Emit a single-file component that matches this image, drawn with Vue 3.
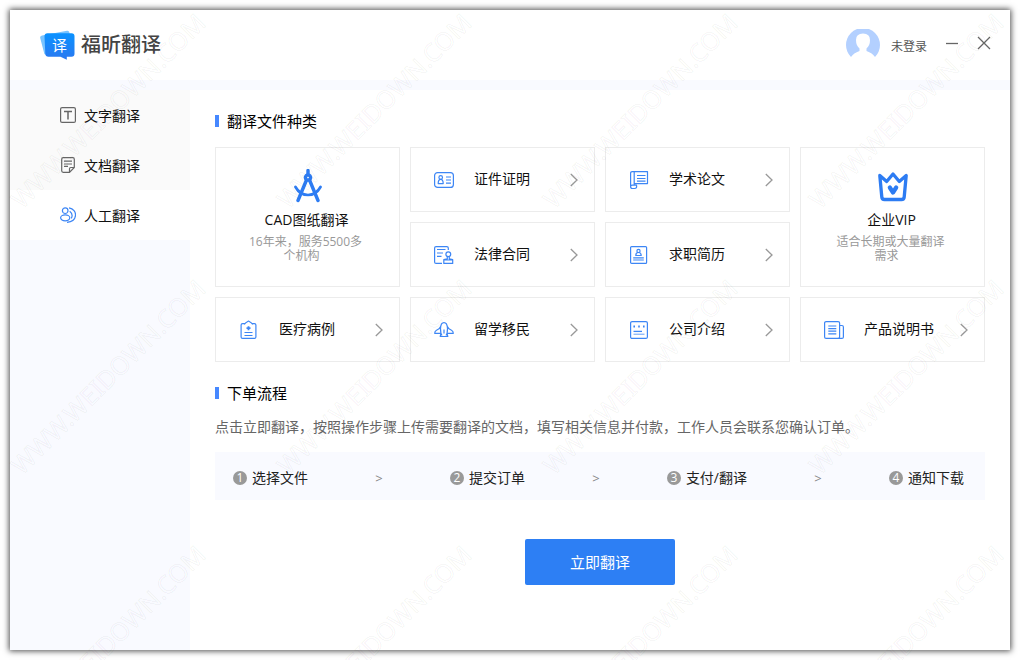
<script setup>
import { ref } from 'vue'

const menu = [
  { id: 'text', label: '文字翻译' },
  { id: 'doc', label: '文档翻译' },
  { id: 'human', label: '人工翻译' },
]
const active = ref('human')

const kinds = [
  { id: 'cad', label: 'CAD图纸翻译', lines: ['16年来，服务5500多', '个机构'] },
  { id: 'license', label: '证件证明' },
  { id: 'paper', label: '学术论文' },
  { id: 'vip', label: '企业VIP', lines: ['适合长期或大量翻译', '需求'] },
  { id: 'contract', label: '法律合同' },
  { id: 'resume', label: '求职简历' },
  { id: 'medical', label: '医疗病例' },
  { id: 'abroad', label: '留学移民' },
  { id: 'company', label: '公司介绍' },
  { id: 'manual', label: '产品说明书' },
]

const steps = ['选择文件', '提交订单', '支付/翻译', '通知下载']

const marks = []
for (let row = 0; row < 3; row++) {
  for (let col = 0; col < 4; col++) marks.push({ x: 22 + col * 266, y: 210 + row * 266 })
}
</script>

<template>
  <div class="desktop">
    <div class="window">
      <header class="header">
        <div class="brand">
          <svg class="logo" viewBox="0 0 35 30" aria-hidden="true">
            <defs>
              <linearGradient id="logoFill" x1="0" y1="0" x2="0" y2="1">
                <stop offset="0" stop-color="#0a92ff" />
                <stop offset="1" stop-color="#2b78f0" />
              </linearGradient>
            </defs>
            <path d="M2 5.400 27 .8q2-.3 2.400 1.600L30 5 8 26l-3.600-2L.2 8Q-.2 5.800 2 5.400z" fill="#79c4ff" />
            <path d="M7.500 3.300h24q3 0 3 3v17.400q0 3-3 3H26.800V29.800L20.500 26.700H8.500q-3 0-3.200-3L4.500 6.300q0-3 3-3z" fill="url(#logoFill)" />
            <text x="19.500" y="21" text-anchor="middle" class="logo-char">译</text>
          </svg>
          <h1 class="brand-name">福昕翻译</h1>
        </div>
        <div class="account">
          <button class="user" type="button">
            <svg class="avatar" viewBox="0 0 34 28" aria-hidden="true">
              <path d="M5 28A17 17 0 1 1 29 28Q26.500 24 20.500 22V19.500Q24 16.500 24 11Q24 4.500 17 4.500T10 11Q10 16.500 13.500 19.500V22Q7.500 24 5 28z" fill="#b3d0ff" />
            </svg>
            <span>未登录</span>
          </button>
          <button class="win-btn" type="button" aria-label="最小化">
            <svg viewBox="0 0 14 14"><path d="M1 7.500h12" /></svg>
          </button>
          <button class="win-btn" type="button" aria-label="关闭">
            <svg viewBox="0 0 14 14"><path d="M1 1l12 12M13 1 1 13" /></svg>
          </button>
        </div>
      </header>

      <div class="body">
        <nav class="sidebar">
          <button
            v-for="m in menu"
            :key="m.id"
            type="button"
            class="menu-item"
            :class="{ active: active === m.id }"
            @click="active = m.id"
          >
            <svg class="menu-icon" viewBox="0 0 16 16" aria-hidden="true">
              <template v-if="m.id === 'text'">
                <rect x=".6" y=".6" width="14.800" height="14.800" rx="1.500" />
                <path d="M4 4.500h8M8 4.500V12.500" stroke-width="1.500" />
              </template>
              <template v-else-if="m.id === 'doc'">
                <path d="M14.300 9.500V2.200q0-1.500-1.500-1.500H3.200q-1.500 0-1.500 1.500v11.600q0 1.500 1.500 1.500h6.300l4.800-4.800V9.500M9.500 15V11.800q0-1.300 1.300-1.300h3.400" />
                <path d="M4 4.200h8M4 7h8M4 9.300h4" />
              </template>
              <template v-else>
                <circle cx="5.200" cy="3.700" r="2.800" />
                <ellipse cx="5.200" cy="10.800" rx="4.600" ry="3" />
                <path d="M9 .8c9 1.500 9 13.500-2 14.500M9.700 4.200q3.800 3 1.600 7.200" />
              </template>
            </svg>
            <span>{{ m.label }}</span>
          </button>
        </nav>

        <main class="main">
          <h2 class="title">翻译文件种类</h2>
          <div class="kinds">
            <button v-for="k in kinds" :key="k.id" type="button" class="card" :class="{ tall: k.lines }">
              <template v-if="k.lines">
                <svg v-if="k.id === 'cad'" class="big-icon" viewBox="0 0 28 34" aria-hidden="true">
                  <path d="M14 1.500V6M12.500 11 4 31.500M15.500 11 24 31.500" stroke-width="3.400" />
                  <path d="M1.500 18Q6 26 14 26T26.500 18" stroke-width="2.700" />
                  <circle cx="14" cy="8.500" r="2.600" stroke-width="3.400" />
                </svg>
                <svg v-else class="big-icon vip" viewBox="0 0 30 34" aria-hidden="true">
                  <path d="M1.800 6.500 8.700 12.500 15 5 21.300 12.500 28.200 6.500 26.200 28Q26 30.500 23.500 30.500H6.500Q4 30.500 3.800 28z" stroke-width="3.300" />
                  <path d="M11.800 18.500 15 23.500 18.200 18.500" stroke-width="4.200" />
                </svg>
                <span class="tall-label">{{ k.label }}</span>
                <span class="desc">
                  <span v-for="l in k.lines" :key="l" class="desc-line">{{ l }}</span>
                </span>
              </template>
              <template v-else>
                <svg class="icon" viewBox="0 0 20 20" aria-hidden="true">
                  <template v-if="k.id === 'license'">
                    <rect x=".6" y="2.600" width="18.800" height="14.800" rx="3" />
                    <circle cx="6.700" cy="7.500" r="1.800" />
                    <path d="M4.200 13.600q0-4.300 2.500-4.300t2.500 4.300zM12 7h5M12 10h5M12 13.200h5" />
                  </template>
                  <template v-else-if="k.id === 'paper'">
                    <path d="M5 1.600h13.500v12H5.200M5.200 1.600H3.300q-1.700 0-1.700 1.700v13.200M5.200 1.600v13.600M1.600 16.800q0-1.600 1.700-1.600H7.500q.8 3.300-2 3.300H3.300q-1.700 0-1.700-1.700z" />
                    <path d="M8 5.500h8.500M8 8.500h8.500M8 11.200h8.500" />
                  </template>
                  <template v-else-if="k.id === 'contract'">
                    <path d="M14.300 5V3.100q0-1.500-1.500-1.500H2.100q-1.500 0-1.500 1.500v13.800q0 1.500 1.500 1.500H8M3 4.500h8.500M3 8h6M3 11.300h4.500" />
                    <circle cx="14.300" cy="9.300" r="2.400" />
                    <path d="M13.300 11.600v2.200l-3.500.9v3.700h8.900v-3.700l-3.400-.9v-2.200M9.800 15h8.900" />
                  </template>
                  <template v-else-if="k.id === 'resume'">
                    <rect x="1.600" y="1.600" width="16" height="16.800" rx="1" />
                    <circle cx="9.500" cy="5.900" r="1.600" />
                    <path d="M6.800 10.500q0-3 2.700-3t2.700 3zM4.200 12.900h10.600M4.200 15h10.600" />
                  </template>
                  <template v-else-if="k.id === 'medical'">
                    <path d="M6 3.600H3.600q-1.500 0-1.500 1.500v11.800q0 1.500 1.500 1.500h11.800q1.500 0 1.500-1.500V5.100q0-1.500-1.500-1.500H13M5.200 4.500Q6 2.800 9.500 1q3.500 1.800 4.300 3.500" />
                    <path d="M9.500 6.200v4M7.500 8.200h4" stroke-width="1.800" />
                    <path d="M5.500 12.500h8M5.500 15.500h8" />
                  </template>
                  <template v-else-if="k.id === 'abroad'">
                    <path d="M8 15.500Q6.500 13.500 6.500 8.500 6.800 2.600 10 2.600t3.500 5.900q0 5-1.500 7M6.500 6.800Q5.800 9 2.500 10.300.7 11.200.7 13.300H7M13.500 6.800q.7 2.200 4 3.500 1.800.9 1.800 3H13M10 9.500v4M7 13.500l-.8 3h7.600l-.8-3" />
                  </template>
                  <template v-else-if="k.id === 'company'">
                    <rect x="1.600" y="1.600" width="16.800" height="16.800" rx="1.500" />
                    <path d="M4.400 6.400h1.600M9.200 6.400h1.600M14 6.400h1.600" stroke-width="2" />
                    <path d="M4.500 11.400h8.500" stroke-width="1.300" />
                    <path d="M4.500 14.200h11" stroke-width=".8" />
                  </template>
                  <template v-else>
                    <rect x=".6" y="1.600" width="15" height="16.800" rx="1.500" />
                    <path d="M15.600 5.500h2.300q1.500 0 1.500 1.500v9.900q0 1.500-1.500 1.500h-4M4.300 6h8M4.300 8.600h8M4.300 11.200h8M4.300 13.800h8" />
                  </template>
                </svg>
                <span class="label">{{ k.label }}</span>
                <svg class="chevron" viewBox="0 0 8 14" aria-hidden="true"><path d="M.8 1 7 7 .8 13" /></svg>
              </template>
            </button>
          </div>

          <h2 class="title flow-title">下单流程</h2>
          <p class="intro">点击立即翻译，按照操作步骤上传需要翻译的文档，填写相关信息并付款，工作人员会联系您确认订单。</p>
          <div class="steps">
            <template v-for="(s, i) in steps" :key="s">
              <span v-if="i" class="arrow">&gt;</span>
              <span class="step"><span class="num">{{ i + 1 }}</span>{{ s }}</span>
            </template>
          </div>
          <button class="start" type="button">立即翻译</button>
        </main>
      </div>
    </div>

    <svg class="watermark" aria-hidden="true">
      <text
        v-for="m in marks"
        :key="m.x + '-' + m.y"
        :transform="`translate(${m.x} ${m.y}) rotate(-45)`"
      >WWW.WEIDOWN.COM</text>
    </svg>
  </div>
</template>

<style>
body {
  margin: 0;
  background: #fff;
}
</style>

<style scoped>
.desktop {
  position: relative;
  display: flex;
  min-height: 100vh;
  box-sizing: border-box;
  padding: 10px;
  overflow: hidden;
  font-family: "Open Sans", "Noto Sans CJK SC", sans-serif;
  font-size: 14px;
  line-height: 20px;
  color: #111;
}
button {
  font: inherit;
  color: inherit;
  border: 0;
  padding: 0;
  background: none;
  cursor: pointer;
}
svg {
  flex: none;
  fill: none;
}
.window {
  flex: 1;
  display: flex;
  flex-direction: column;
  background: #fff;
  box-shadow: 0 0 6px 1px rgba(0, 0, 0, 0.7);
}
.header {
  display: flex;
  justify-content: space-between;
  align-items: center;
  height: 70px;
  padding: 0 19px 0 30px;
  border-bottom: 10px solid #f9faff;
}
.brand {
  display: flex;
  align-items: center;
  gap: 6px;
}
.logo {
  width: 35px;
  height: 30px;
}
.logo-char {
  font-size: 15px;
  fill: #fff;
}
.brand-name {
  margin: 0;
  font-size: 20px;
  line-height: 28px;
  font-weight: 500;
  color: #444;
}
.account {
  display: flex;
  align-items: center;
  gap: 18px;
  padding-bottom: 4px;
}
.user {
  display: flex;
  align-items: flex-end;
  gap: 11px;
  font-size: 12px;
  color: #555;
}
.avatar {
  width: 34px;
  height: 28px;
}
.win-btn {
  display: flex;
}
.win-btn svg {
  width: 14px;
  height: 14px;
  stroke: #666;
  stroke-width: 1.3;
}
.body {
  flex: 1;
  display: flex;
}
.sidebar {
  display: flex;
  flex-direction: column;
  width: 180px;
  background: #f9faff;
}
.menu-item {
  display: flex;
  align-items: center;
  gap: 8px;
  height: 50px;
  padding-left: 50px;
  background: #fafafa;
}
.menu-item span {
  padding-top: 2px;
}
.menu-item.active {
  background: #fff;
}
.menu-icon {
  width: 16px;
  height: 16px;
  stroke: #666;
  stroke-width: 1.2;
}
.active .menu-icon {
  stroke: #3d86f5;
}
.main {
  flex: 1;
  display: flex;
  flex-direction: column;
  padding: 21px 25px;
}
.title {
  display: flex;
  align-items: center;
  gap: 8px;
  margin: 0;
  font-size: 15px;
  line-height: 20px;
  font-weight: 400;
  color: #000;
}
.title::before {
  content: "";
  width: 4px;
  height: 12px;
  background: #4688ff;
}
.kinds {
  display: grid;
  grid-template-columns: repeat(4, 1fr);
  grid-auto-rows: 65px;
  gap: 10px;
  margin-top: 16px;
}
.card {
  display: flex;
  align-items: center;
  padding: 0 16px 0 23px;
  border: 1px solid #ececec;
}
.card.tall {
  grid-row: span 2;
  flex-direction: column;
  padding: 21px 20px;
}
.big-icon {
  width: 28px;
  height: 34px;
  stroke: #2d7cf3;
  stroke-linecap: round;
  stroke-linejoin: round;
}
.big-icon.vip {
  width: 30px;
}
.tall-label {
  margin-top: 7px;
  padding-right: 2px;
}
.desc {
  margin-top: 5px;
  padding-right: 4px;
  font-size: 12px;
  line-height: 14px;
  color: #999;
}
.desc-line {
  display: block;
}
.desc-line:last-child {
  padding-right: 8px;
}
.icon {
  width: 20px;
  height: 20px;
  stroke: #3d86f5;
  stroke-width: 1.2;
  stroke-linejoin: round;
}
.label {
  flex: 1;
  margin-left: 20px;
  padding-bottom: 2px;
  text-align: left;
}
.chevron {
  width: 8px;
  height: 14px;
  stroke: #999;
  stroke-width: 1.3;
}
.flow-title {
  margin-top: 21px;
}
.intro {
  margin: 14px 0 0;
  color: #666;
}
.steps {
  display: flex;
  justify-content: space-between;
  align-items: center;
  height: 45px;
  margin-top: 15px;
  padding: 3px 21px 0 18px;
  background: #f9faff;
  color: #222;
}
.step {
  display: flex;
  align-items: center;
  gap: 5px;
}
.num {
  width: 14px;
  border-radius: 7px;
  background: #999;
  color: #fff;
  font-size: 12px;
  line-height: 14px;
  text-align: center;
}
.arrow {
  font-size: 13px;
  color: #888;
}
.start {
  align-self: center;
  width: 150px;
  height: 46px;
  margin-top: 39px;
  border-radius: 2px;
  background: #2d7ff4;
  color: #fff;
  font-size: 15px;
}
.watermark {
  position: absolute;
  inset: 0;
  width: 100%;
  height: 100%;
  pointer-events: none;
  font-family: "Noto Sans", sans-serif;
  font-size: 25px;
  stroke: #000;
  stroke-opacity: 0.05;
}
</style>
